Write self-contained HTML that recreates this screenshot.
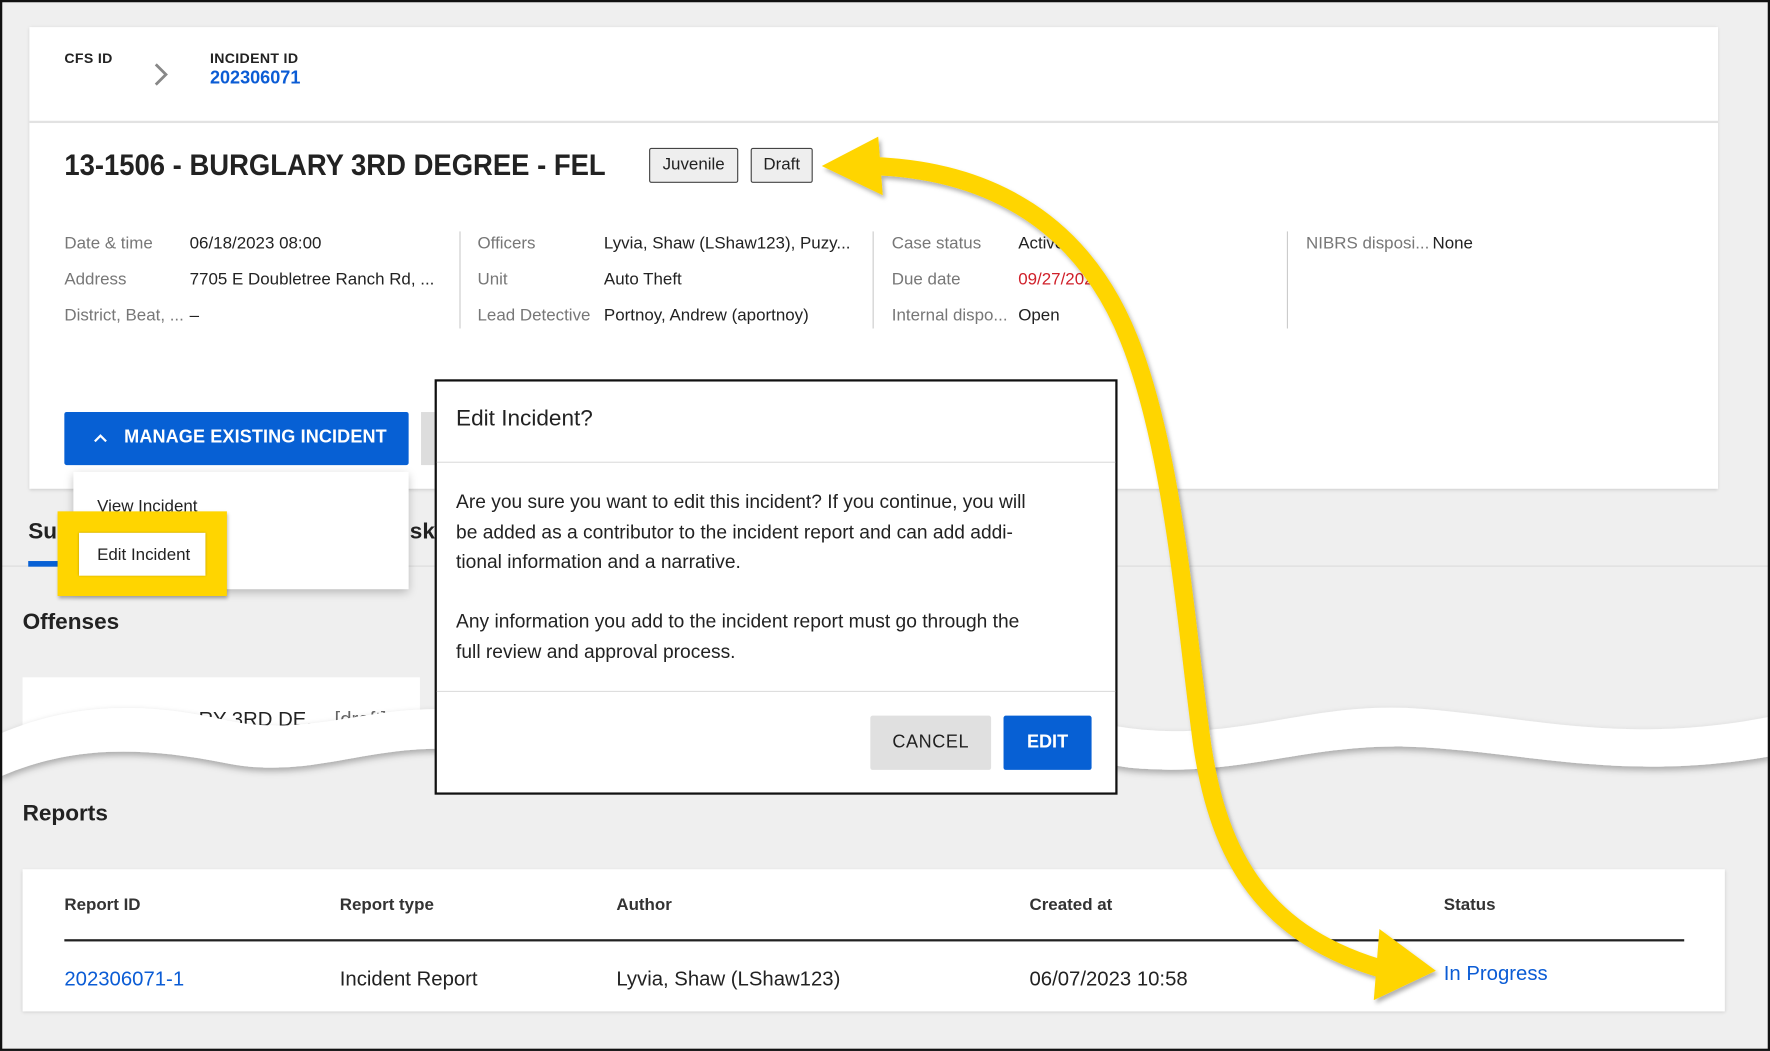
<!DOCTYPE html>
<html><head><meta charset="utf-8"><style>
*{margin:0;padding:0;box-sizing:border-box}
html,body{width:1770px;height:1051px;overflow:hidden;background:#efefef;font-family:"Liberation Sans",sans-serif;color:#222}
#s{position:absolute;left:0;top:0;width:1568px;height:931px;transform:scale(1.12883);transform-origin:0 0;background:#efefef}
#fr{position:absolute;left:0;top:0;width:1568px;height:931px;border:2px solid #111;pointer-events:none}
.a{position:absolute;white-space:nowrap}
.lab{color:#777;font-size:15px}
.val{color:#222;font-size:15px}
.sep{position:absolute;width:1px;background:#ccc;top:205px;height:86px}
</style></head><body><div id="s">
<div class="a" style="left:26px;top:24px;width:1496px;height:409px;background:#fff;box-shadow:0 1px 3px rgba(0,0,0,.15)"></div>
<div class="a" style="left:26px;top:107px;width:1496px;height:2px;background:#e2e2e2"></div>
<div class="a" style="left:57px;top:45px;font-size:12.5px;font-weight:bold;letter-spacing:.3px">CFS ID</div>
<svg class="a" style="left:135px;top:54px" width="16" height="24"><path d="M3 3 L12 12 L3 21" fill="none" stroke="#888" stroke-width="2.5"/></svg>
<div class="a" style="left:186px;top:45px;font-size:12.5px;font-weight:bold;letter-spacing:.3px">INCIDENT ID</div>
<div class="a" style="left:186px;top:61px;font-size:16px;font-weight:bold;color:#0b5cd5">202306071</div>
<div class="a" style="left:57px;top:131px;font-size:26px;font-weight:bold;color:#222;transform:scaleX(.935);transform-origin:0 0">13-1506 - BURGLARY 3RD DEGREE - FEL</div>
<div class="a" style="left:575px;top:131px;width:79px;height:31px;border:1.5px solid #444;background:#eee;font-size:15px;text-align:center;line-height:28px;border-radius:2px">Juvenile</div>
<div class="a" style="left:665px;top:131px;width:55px;height:31px;border:1.5px solid #444;background:#eee;font-size:15px;text-align:center;line-height:28px;border-radius:2px">Draft</div>
<div class="a lab" style="left:57px;top:207px">Date &amp; time</div><div class="a val" style="left:168px;top:207px">06/18/2023 08:00</div>
<div class="a lab" style="left:57px;top:239px">Address</div><div class="a val" style="left:168px;top:239px">7705 E Doubletree Ranch Rd, ...</div>
<div class="a lab" style="left:57px;top:271px">District, Beat, ...</div><div class="a val" style="left:168px;top:271px">–</div>
<div class="sep" style="left:407px"></div>
<div class="a lab" style="left:423px;top:207px">Officers</div><div class="a val" style="left:535px;top:207px">Lyvia, Shaw (LShaw123), Puzy...</div>
<div class="a lab" style="left:423px;top:239px">Unit</div><div class="a val" style="left:535px;top:239px">Auto Theft</div>
<div class="a lab" style="left:423px;top:271px">Lead Detective</div><div class="a val" style="left:535px;top:271px">Portnoy, Andrew (aportnoy)</div>
<div class="sep" style="left:773px"></div>
<div class="a lab" style="left:790px;top:207px">Case status</div><div class="a val" style="left:902px;top:207px">Active</div>
<div class="a lab" style="left:790px;top:239px">Due date</div><div class="a val" style="left:902px;top:239px;color:#d0202a">09/27/2023</div>
<div class="a lab" style="left:790px;top:271px">Internal dispo...</div><div class="a val" style="left:902px;top:271px">Open</div>
<div class="sep" style="left:1140px"></div>
<div class="a lab" style="left:1157px;top:207px">NIBRS disposi...</div><div class="a val" style="left:1269px;top:207px">None</div>
<div class="a" style="left:373px;top:365px;width:14px;height:47px;background:#ddd"></div>
<div class="a" style="left:57px;top:365px;width:305px;height:47px;background:#0760d4;border-radius:2px"></div>
<svg class="a" style="left:82px;top:382px" width="14" height="12"><path d="M2 9 L7 4 L12 9" fill="none" stroke="#fff" stroke-width="2"/></svg>
<div class="a" style="left:110px;top:379px;font-size:16px;font-weight:bold;color:#fff;letter-spacing:.1px">MANAGE EXISTING INCIDENT</div>
<div class="a" style="left:0;top:501px;width:1568px;height:1px;background:#ddd"></div>
<div class="a" style="left:25px;top:460px;font-size:20px;font-weight:bold">Su</div>
<div class="a" style="left:25px;top:497px;width:40px;height:5px;background:#0760d4"></div>
<div class="a" style="left:363px;top:460px;font-size:20px;font-weight:bold">sk</div>
<div class="a" style="left:65px;top:418px;width:297px;height:104px;background:#fff;box-shadow:0 3px 8px rgba(0,0,0,.25)"></div>
<div class="a" style="left:86px;top:440px;font-size:15px">View Incident</div>
<div class="a" style="left:51px;top:453px;width:150px;height:75px;background:#ffd500;box-shadow:1px 2px 3px rgba(0,0,0,.3)"></div>
<div class="a" style="left:70px;top:472px;width:112px;height:38px;background:#fff;box-shadow:0 0 2px rgba(0,0,0,.3)"></div>
<div class="a" style="left:86px;top:483px;font-size:15px">Edit Incident</div>
<div class="a" style="left:20px;top:540px;font-size:20px;font-weight:bold">Offenses</div>
<div class="a" style="left:20px;top:600px;width:352px;height:60px;background:#fff"></div>
<div class="a" style="left:176px;top:627px;font-size:18px;color:#222">RY 3RD DE...&nbsp;&nbsp;<span style="color:#666">[draft]</span></div>
<svg class="a" style="left:0;top:610px" width="1568" height="100">
<defs><filter id="f" x="-5%" y="-50%" width="110%" height="200%"><feDropShadow dx="0" dy="3" stdDeviation="3" flood-color="#000" flood-opacity=".3"/></filter></defs>
<path d="M0 40 C60 15 120 10 200 28 C280 45 330 10 420 20 C520 30 600 40 700 25 C800 10 900 20 1000 35 C1100 48 1160 10 1260 18 C1360 26 1440 50 1568 25 L1568 60 C1440 82 1360 58 1260 52 C1160 46 1100 80 1000 70 C900 55 800 45 700 60 C600 75 520 65 420 55 C330 45 280 82 200 66 C120 50 60 52 0 78 Z" fill="#fff" filter="url(#f)"/>
</svg>
<div class="a" style="left:20px;top:710px;font-size:20px;font-weight:bold">Reports</div>
<div class="a" style="left:20px;top:770px;width:1508px;height:126px;background:#fff;box-shadow:0 1px 3px rgba(0,0,0,.15)"></div>
<div class="a" style="left:57px;top:793px;font-size:15px;font-weight:bold;color:#333">Report ID</div>
<div class="a" style="left:301px;top:793px;font-size:15px;font-weight:bold;color:#333">Report type</div>
<div class="a" style="left:546px;top:793px;font-size:15px;font-weight:bold;color:#333">Author</div>
<div class="a" style="left:912px;top:793px;font-size:15px;font-weight:bold;color:#333">Created at</div>
<div class="a" style="left:1279px;top:793px;font-size:15px;font-weight:bold;color:#333">Status</div>
<div class="a" style="left:57px;top:832px;width:1435px;height:2px;background:#222"></div>
<div class="a" style="left:57px;top:857px;font-size:18px;color:#0b5cd5">202306071-1</div>
<div class="a" style="left:301px;top:857px;font-size:18px">Incident Report</div>
<div class="a" style="left:546px;top:857px;font-size:18px">Lyvia, Shaw (LShaw123)</div>
<div class="a" style="left:912px;top:857px;font-size:18px">06/07/2023 10:58</div>
<div class="a" style="left:1279px;top:852px;font-size:18px;color:#0b5cd5">In Progress</div>
<div class="a" style="left:385px;top:336px;width:605px;height:368px;background:#fff;border:2px solid #111"></div>
<div class="a" style="left:404px;top:360px;font-size:20px;color:#222">Edit Incident?</div>
<div class="a" style="left:387px;top:409px;width:601px;height:1px;background:#ddd"></div>
<div class="a" style="left:404px;top:432px;font-size:17px;line-height:26.6px;color:#222">Are you sure you want to edit this incident? If you continue, you will<br>be added as a contributor to the incident report and can add addi-<br>tional information and a narrative.<br><br>Any information you add to the incident report must go through the<br>full review and approval process.</div>
<div class="a" style="left:387px;top:612px;width:601px;height:1px;background:#ddd"></div>
<div class="a" style="left:771px;top:634px;width:107px;height:48px;background:#e0e0e0;font-size:16px;text-align:center;line-height:48px;letter-spacing:.5px;border-radius:2px">CANCEL</div>
<div class="a" style="left:889px;top:634px;width:78px;height:48px;background:#0760d4;color:#fff;font-weight:bold;font-size:16px;text-align:center;line-height:48px;border-radius:2px">EDIT</div>
<svg class="a" style="left:0;top:0" width="1568" height="931">
<defs><filter id="g" x="-20%" y="-20%" width="140%" height="140%"><feDropShadow dx="2" dy="3" stdDeviation="2" flood-color="#000" flood-opacity=".3"/></filter></defs>
<g filter="url(#g)" fill="#ffd500">
<path d="M770 147 C880 150 960 200 1000 300 C1040 400 1050 550 1065 660 C1080 760 1120 830 1230 860" fill="none" stroke="#ffd500" stroke-width="16"/>
<polygon points="728,147 778,121 782,173"/>
<polygon points="1272,860 1222,823 1217,886"/>
</g>
</svg>
<div id="fr"></div>
</div></body></html>
